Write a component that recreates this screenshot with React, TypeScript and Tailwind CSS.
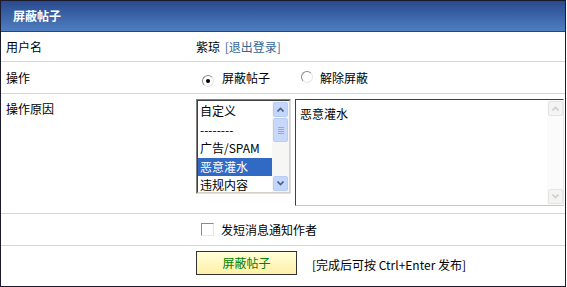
import { useState } from "react";

const font = { fontFamily: '"SimSun","Noto Sans CJK SC","DejaVu Sans",sans-serif' };

const Radio = ({ checked }: { checked: boolean }) => (
    <span className="inline-flex w-[12px] h-[12px] rounded-full border border-[#8a8a8a] border-r-[#e6e6e6] border-b-[#e6e6e6] bg-white items-center justify-center">
        {checked && <span className="w-[4px] h-[4px] rounded-full bg-black" />}
    </span>
);

const ScrollArrow = ({ up, dim }: { up: boolean; dim?: boolean }) => (
    <div className={`w-[15px] h-[15px] rounded-[2px] flex items-center justify-center border ${dim ? "border-[#e4e4e4] bg-[#f4f4f2]" : "border-[#b8cdf5] bg-[#c5d6fc]"}`}>
        <svg width="7" height="5" viewBox="0 0 7 5">
            <path d={up ? "M0.5 4.5 L3.5 1.5 L6.5 4.5" : "M0.5 0.5 L3.5 3.5 L6.5 0.5"} fill="none" stroke={dim ? "#cfcfcf" : "#4d6185"} strokeWidth="1.6" />
        </svg>
    </div>
);

const reasons = ["自定义", "--------", "广告/SPAM", "恶意灌水", "违规内容"];

export default function App() {
    const [mode] = useState(0);
    return (
        <div className="w-[567px] h-[287px] bg-white text-[12px] text-black" style={font}>
            <div className="w-[566px] h-[287px] border border-[#1a1a2a] flex flex-col">
                <div className="h-[31px] shrink-0 bg-gradient-to-b from-[#2a4a8e] to-[#4f7fc0] border-b border-[#24447e] flex items-center pl-[12px] text-white font-bold">
                    屏蔽帖子
                </div>
                <div className="h-[30px] shrink-0 flex items-center border-b border-[#cad9e6]">
                    <div className="w-[195px] pl-[5px]">用户名</div>
                    <div>
                        紫琼 <a className="text-[#336699] ml-[2px]">[退出登录]</a>
                    </div>
                </div>
                <div className="h-[32px] shrink-0 flex items-center border-b border-[#cad9e6]">
                    <div className="w-[195px] pl-[5px]">操作</div>
                    <div className="flex items-center">
                        <span className="ml-[6px]"><Radio checked={mode === 0} /></span>
                        <span className="ml-[8px]">屏蔽帖子</span>
                        <span className="ml-[31px]"><Radio checked={mode === 1} /></span>
                        <span className="ml-[7px]">解除屏蔽</span>
                    </div>
                </div>
                <div className="h-[120px] shrink-0 flex border-b border-[#cad9e6]">
                    <div className="w-[195px] pl-[5px] pt-[6px]">操作原因</div>
                    <div className="flex pt-[5px]">
                        <div className="w-[95px] h-[95px] border border-[#808080] border-r-[#e0e0e0] border-b-[#e0e0e0] flex">
                            <div className="flex-1 border border-[#404040] border-r-[#d4d0c8] border-b-[#d4d0c8] flex">
                                <div className="flex-1 pt-[1px]">
                                    {reasons.map((r, i) => (
                                        <div key={i} className={`h-[18.5px] leading-[18.5px] pl-[2px] ${i === 3 ? "bg-[#316ac5] text-white" : ""}`}>{r}</div>
                                    ))}
                                </div>
                                <div className="w-[17px] bg-[#f6f6f4] flex flex-col items-center py-[1px]">
                                    <ScrollArrow up />
                                    <div className="w-[15px] h-[24px] mt-[1px] rounded-[2px] border border-[#b8cdf5] bg-[#c8d8fb] flex flex-col items-center justify-center gap-[1px]">
                                        <span className="w-[6px] h-px bg-[#8fa8e0]" />
                                        <span className="w-[6px] h-px bg-[#8fa8e0]" />
                                        <span className="w-[6px] h-px bg-[#8fa8e0]" />
                                        <span className="w-[6px] h-px bg-[#8fa8e0]" />
                                    </div>
                                    <div className="flex-1" />
                                    <ScrollArrow up={false} />
                                </div>
                            </div>
                        </div>
                        <div className="ml-[4px] w-[269px] h-[107px] border border-[#404040] border-r-[#e8e8e8] border-b-[#c8c8c8] flex">
                            <div className="flex-1 pl-[4px] pt-[5px]">恶意灌水</div>
                            <div className="w-[16px] bg-[#fbfbfb] flex flex-col items-center py-[1px]">
                                <ScrollArrow up dim />
                                <div className="flex-1" />
                                <ScrollArrow up={false} dim />
                            </div>
                        </div>
                    </div>
                </div>
                <div className="h-[32px] shrink-0 flex items-center border-b border-[#cad9e6]">
                    <div className="w-[195px]" />
                    <span className="ml-[5px] w-[13px] h-[13px] border border-[#8a8a8a] border-r-[#e6e6e6] border-b-[#e6e6e6] bg-white" />
                    <span className="ml-[7px]">发短消息通知作者</span>
                </div>
                <div className="flex-1 flex items-start pt-[5px]">
                    <div className="w-[195px]" />
                    <button className="w-[101px] h-[24px] border border-[#333] bg-gradient-to-b from-[#ffffd8] to-[#fff0a8] text-[#008000]">屏蔽帖子</button>
                    <span className="ml-[15px] mt-[5px]">[完成后可按 Ctrl+Enter 发布]</span>
                </div>
            </div>
        </div>
    );
}
